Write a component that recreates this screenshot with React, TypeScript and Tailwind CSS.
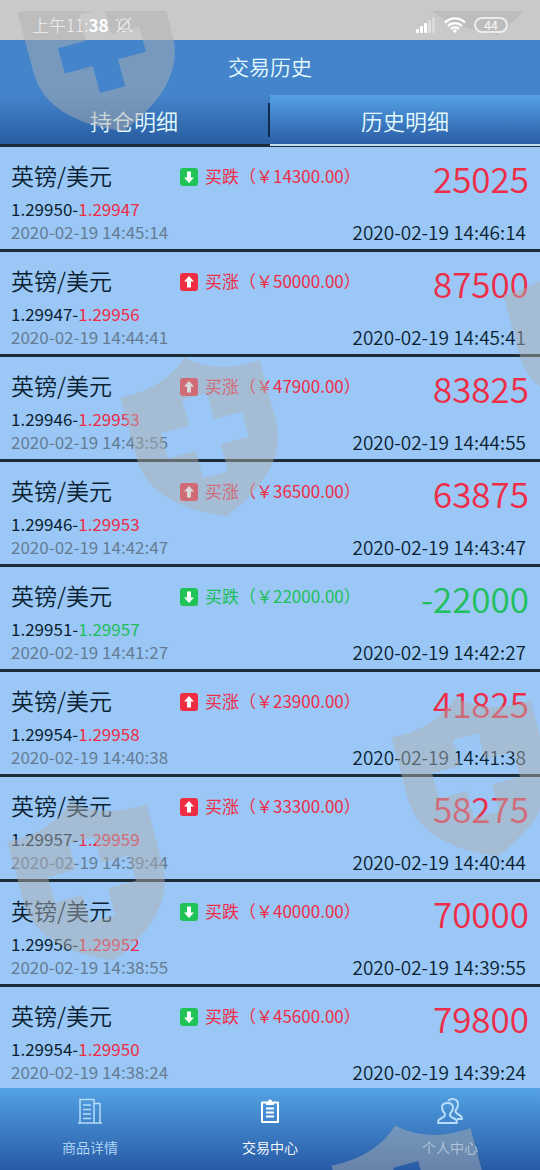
import { useState } from "react";

type Direction = "up" | "down";

interface Trade {
  direction: Direction;
  amount: string;
  open: string;
  close: string;
  profit: string;
  openedAt: string;
  closedAt: string;
}

const trades: Trade[] = [
  { direction: "down", amount: "14300.00", open: "1.29950", close: "1.29947", profit: "25025", openedAt: "2020-02-19 14:45:14", closedAt: "2020-02-19 14:46:14" },
  { direction: "up", amount: "50000.00", open: "1.29947", close: "1.29956", profit: "87500", openedAt: "2020-02-19 14:44:41", closedAt: "2020-02-19 14:45:41" },
  { direction: "up", amount: "47900.00", open: "1.29946", close: "1.29953", profit: "83825", openedAt: "2020-02-19 14:43:55", closedAt: "2020-02-19 14:44:55" },
  { direction: "up", amount: "36500.00", open: "1.29946", close: "1.29953", profit: "63875", openedAt: "2020-02-19 14:42:47", closedAt: "2020-02-19 14:43:47" },
  { direction: "down", amount: "22000.00", open: "1.29951", close: "1.29957", profit: "-22000", openedAt: "2020-02-19 14:41:27", closedAt: "2020-02-19 14:42:27" },
  { direction: "up", amount: "23900.00", open: "1.29954", close: "1.29958", profit: "41825", openedAt: "2020-02-19 14:40:38", closedAt: "2020-02-19 14:41:38" },
  { direction: "up", amount: "33300.00", open: "1.29957", close: "1.29959", profit: "58275", openedAt: "2020-02-19 14:39:44", closedAt: "2020-02-19 14:40:44" },
  { direction: "down", amount: "40000.00", open: "1.29956", close: "1.29952", profit: "70000", openedAt: "2020-02-19 14:38:55", closedAt: "2020-02-19 14:39:55" },
  { direction: "down", amount: "45600.00", open: "1.29954", close: "1.29950", profit: "79800", openedAt: "2020-02-19 14:38:24", closedAt: "2020-02-19 14:39:24" },
];

function StatusBar() {
  return (
    <div className="flex h-10 shrink-0 items-center justify-between bg-[#c9c9c9] pt-[9px] pr-8 pl-8 text-[17px] text-white">
      <div className="z-10 flex items-center gap-[6px]">
        <span className="font-light text-white/80">
          上午11:<b className="font-bold text-white">38</b>
        </span>
        <svg className="h-[18px] w-[18px]" viewBox="0 0 18 18" fill="none" stroke="currentColor" strokeWidth="1.2" opacity="0.7">
          <path d="M4 13V8a5 5 0 0 1 10 0v5zM7 15.500h4M2 16L16 2M1 5l2-2M15 14l2 2" />
        </svg>
      </div>
      <div className="z-10 flex items-center gap-2">
        <svg className="h-4 w-5" viewBox="0 0 20 16" fill="currentColor">
          <rect x="0" y="12" width="3" height="4" rx="1" />
          <rect x="4" y="9" width="3" height="7" rx="1" />
          <rect x="8" y="6" width="3" height="10" rx="1" />
          <rect x="12" y="3" width="3" height="13" rx="1" opacity="0.4" />
          <rect x="16" y="0" width="3" height="16" rx="1" opacity="0.3" />
        </svg>
        <svg className="h-4 w-[22px]" viewBox="0 0 22 16" fill="none" stroke="currentColor" strokeWidth="2.200">
          <path d="M1 5.500a14 14 0 0 1 20 0M4 9a9.800 9.800 0 0 1 14 0M7 12a5.600 5.600 0 0 1 8 0" />
          <circle cx="11" cy="14" r="1.800" fill="currentColor" stroke="none" />
        </svg>
        <span className="flex h-4 w-[34px] items-center justify-center rounded-full border-2 border-white/70 text-[12px] leading-3 font-medium text-white/80">
          44
        </span>
      </div>
    </div>
  );
}

function DirectionIcon({ direction }: { direction: Direction }) {
  return (
    <svg className="mt-[2px] h-[18px] w-[18px]" viewBox="0 0 18 18">
      <rect width="18" height="18" rx="3" fill={direction === "up" ? "#ee2d42" : "#20c355"} />
      <path
        d={direction === "up" ? "M9 3l5 5.500h-3V14.500H7V8.500H4z" : "M9 15l5-5.500h-3V3.500H7V9.500H4z"}
        fill="#fff"
      />
    </svg>
  );
}

function TradeRow({ trade }: { trade: Trade }) {
  const lost = trade.profit.startsWith("-");
  const tone = lost ? "text-[#20bf5c]" : "text-[#ee2d48]";

  return (
    <li className="border-b-3 border-[#1d2c36] px-[11px] pt-3 pb-[6px]">
      <div className="flex h-[38px] items-start">
        <h2 className="w-[169px] text-[23px] leading-[33px]">英镑/美元</h2>
        <div className={`flex flex-1 items-center gap-[7px] text-[17px] leading-[33px] font-normal ${tone}`}>
          <DirectionIcon direction={trade.direction} />
          <span className="whitespace-nowrap">
            {trade.direction === "up" ? "买涨" : "买跌"}（￥{trade.amount}）
          </span>
        </div>
        <strong className={`text-[35px] leading-[38px] font-[350] ${tone}`}>{trade.profit}</strong>
      </div>
      <div className="flex items-end justify-between">
        <div className="text-[17px] leading-[23px] font-normal">
          <p>
            {trade.open}-<span className={tone}>{trade.close}</span>
          </p>
          <p className="text-[#657c94]">{trade.openedAt}</p>
        </div>
        <time className="pr-[3px] text-[19px] leading-[23px]">{trade.closedAt}</time>
      </div>
    </li>
  );
}

// shield origins, the middle of the line between both shoulders
const shields = [
  [87, -6],
  [461, -103],
  [573, 276],
  [190, 379],
  [461, 719],
  [77, 823],
  [401, 1147],
];

function Watermark() {
  return (
    <svg className="pointer-events-none absolute inset-0 h-full w-full [clip-path:inset(11px_0_0_0)]" aria-hidden="true">
      {shields.map(([x, y]) => (
        <path
          key={`${x}-${y}`}
          transform={`translate(${x} ${y}) rotate(-15)`}
          fill="#b0b0b0"
          fillOpacity="0.48"
          fillRule="evenodd"
          d="M-72 0Q-28 3 0 -22Q28 3 72 0V62C72 98 44 124 0 142C-44 124 -72 98 -72 62ZM-13 18V45H-42V71H-13V99H13V71H42V45H13V18Z"
        />
      ))}
    </svg>
  );
}

function GoodsIcon() {
  return (
    <svg className="h-[26px] w-[26px]" viewBox="0 0 26 26" fill="none" stroke="currentColor" strokeWidth="1.500">
      <path d="M1 25h24M3 25V1.500h14V25M17 5.500h6V25M6 7h8M6 11.500h8M6 16h8M6 20.500h8" />
    </svg>
  );
}

function TradeIcon() {
  return (
    <svg className="h-[26px] w-[26px]" viewBox="0 0 26 26" fill="none" stroke="currentColor" strokeWidth="2" strokeLinejoin="round">
      <path d="M9 4.500H5V24h16V4.500h-4M9 10.500h8M9 14.500h8M9 18.500h8" />
      <path d="M9 7V3.500h2a2 2 0 0 1 4 0h2V7z" fill="currentColor" stroke="none" />
    </svg>
  );
}

function UserIcon() {
  return (
    <svg className="h-[26px] w-[26px]" viewBox="0 0 26 26" fill="none" stroke="currentColor" strokeWidth="2" strokeLinejoin="round">
      <path d="M8 16C6 14 5 12 5 9.500C5 6.500 7.500 5 10.500 5S16 6.500 16 9.500C16 12 15 14 13 16C12.500 18 14 19 16 20C19 21.300 20 22 20 25H1C1 22 2 21.300 5 20C7 19 8.500 18 8 16Z" />
      <path d="M11 3C12 1.500 13.500 1 15.500 1C19 1 21 3.200 21 6.500C21 9 20 11 18.500 12.500C18 14.500 19.500 15.500 21.500 16.500C24 17.800 25 18.500 25 21H20" />
    </svg>
  );
}

const navItems = [
  { label: "商品详情", icon: <GoodsIcon /> },
  { label: "交易中心", icon: <TradeIcon /> },
  { label: "个人中心", icon: <UserIcon /> },
];

export default function App() {
  const [tab, setTab] = useState(1);

  return (
    <div className="relative flex h-screen flex-col overflow-hidden bg-[#9ac7f5] font-['Noto_Sans_CJK_SC',sans-serif] font-[350] text-[#0b1f33]">
      <StatusBar />

      <header className="shrink-0 bg-[#4484cb] text-[#e6fbff]">
        <h1 className="h-[55px] text-center text-[21px] leading-[52px]">交易历史</h1>
        <div className="grid grid-cols-2 border-b border-[#1d2c36]" role="tablist">
          {["持仓明细", "历史明细"].map((label, i) => (
            <button
              key={label}
              role="tab"
              aria-selected={tab === i}
              onClick={() => setTab(i)}
              className={`flex h-[51px] items-center border-b-2 bg-linear-to-b text-[22px] ${
                tab === i
                  ? "border-[#b9dcf0] from-[#54a2e4] to-[#2b5da6]"
                  : "border-[#1d2c36] from-[#4484cb] to-[#285da1]"
              }`}
            >
              <span className={`flex-1 leading-[34px] ${i === 0 ? "border-r-2 border-[#102a4c]" : ""}`}>{label}</span>
            </button>
          ))}
        </div>
      </header>

      <ul className="min-h-0 flex-1 overflow-y-auto [scrollbar-width:none]">
        {trades.map((trade) => (
          <TradeRow key={trade.openedAt} trade={trade} />
        ))}
      </ul>

      <nav className="grid h-[82px] shrink-0 grid-cols-3 bg-linear-to-b from-[#54a2e4] to-[#285ba5]">
        {navItems.map(({ label, icon }, i) => (
          <a
            key={label}
            href="#"
            aria-current={i === 1 ? "page" : undefined}
            className={`flex flex-col items-center gap-[11px] pt-[10px] text-[14px] leading-6 ${
              i === 1 ? "text-white" : "text-[#b5dcf8]"
            }`}
          >
            {icon}
            {label}
          </a>
        ))}
      </nav>

      <Watermark />
    </div>
  );
}
